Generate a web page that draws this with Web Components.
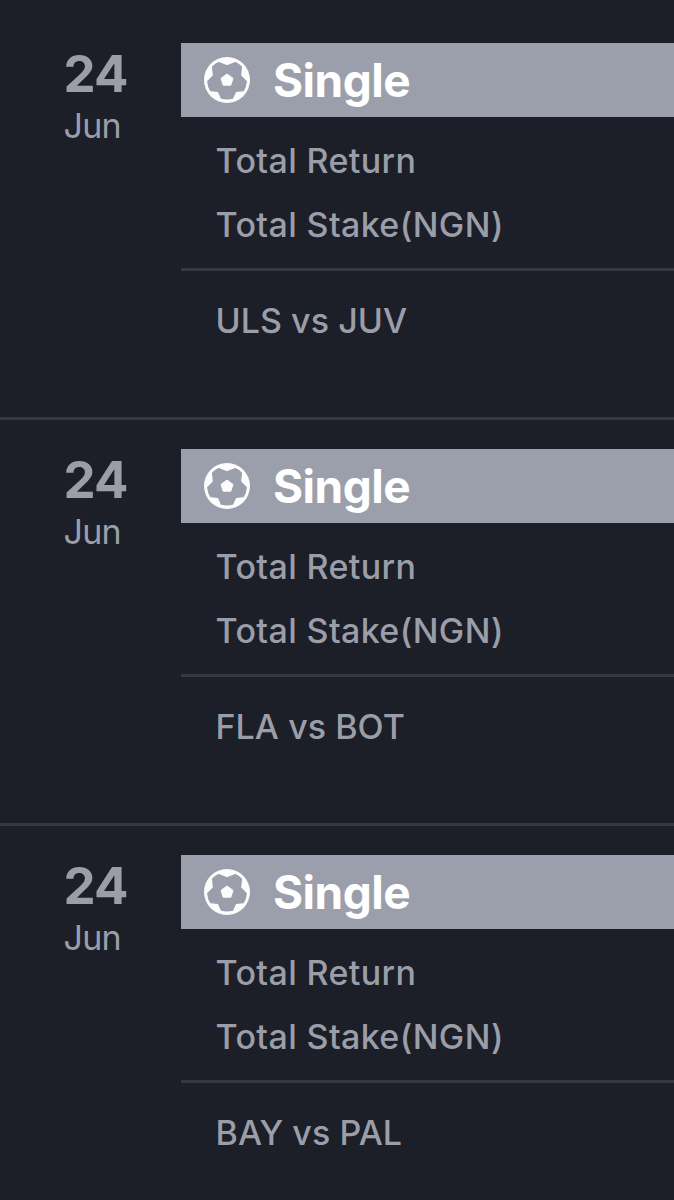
<!DOCTYPE html>
<html lang="en">
<head>
<meta charset="utf-8">
<title>Bet History</title>
<style>
html,body{margin:0;background:#1c1f27}
body{height:1200px;overflow:hidden;font-family:Inter,"Liberation Sans",sans-serif;color:#9b9ea9}
</style>
</head>
<body>
<bet-list>
<bet-ticket day="24" month="Jun" kind="Single">ULS vs JUV</bet-ticket>
<bet-ticket day="24" month="Jun" kind="Single">FLA vs BOT</bet-ticket>
<bet-ticket day="24" month="Jun" kind="Single">BAY vs PAL</bet-ticket>
</bet-list>
<script>
class BetList extends HTMLElement{
  constructor(){
    super();
    this.attachShadow({mode:"open"}).innerHTML=`
<style>:host{display:flex;flex-direction:column;padding-top:14px;height:1186px;overflow:hidden}</style><slot></slot>`;
  }
}
class BallIcon extends HTMLElement{
  constructor(){
    super();
    this.attachShadow({mode:"open"}).innerHTML=`
<style>:host{display:block;width:46px;height:46px}svg{display:block}</style>
<svg width="46" height="46" viewBox="0 0 46 46">
<circle cx="23" cy="23" r="23" fill="#fdfdfe"/>
<path fill="#9b9fab" stroke="#9b9fab" stroke-width="1.2" stroke-linejoin="round" d="M14.6 5.5L23 8.9L31.4 5.5Q35 7 37.4 9.8L36.6 18.6L42.3 24.4Q41.8 29.6 39.4 33.6L31.6 34.4L28.6 41.2Q23 42.6 17.4 41.2L14.4 34.4L6.6 33.6Q4.2 29.6 3.7 24.4L9.4 18.6L8.6 9.8Q11 7 14.6 5.5Z"/>
<path fill="#fdfdfe" stroke="#fdfdfe" stroke-width="1" stroke-linejoin="round" d="M23 17L29 21.4L26.8 28.2H19.2L17 21.4Z"/>
</svg>`;
  }
}
class BetTicket extends HTMLElement{
  connectedCallback(){
    const root=this.attachShadow({mode:"open"});
    root.innerHTML=`
<style>
:host{display:grid;grid-template-columns:180.5px 1fr;box-sizing:border-box;height:406px;flex:none;padding-top:29px;border-bottom:3px solid #353841}
.date{padding:1px 0 0 63.5px;white-space:nowrap}
.day{font-size:51px;line-height:60px;font-weight:700;letter-spacing:-.8px}
.month{font-size:34px;line-height:40px;font-weight:400;letter-spacing:-.7px;padding-top:2px}
header{display:flex;align-items:center;height:74px;background:#9b9fab;padding-left:23px;gap:23.5px;color:#fff;font-size:46px;line-height:74px;font-weight:700;letter-spacing:-.5px}
.totals{padding:12px 0 11px 35px;border-bottom:3px solid #353841}
.totals,.match{font-size:34px;line-height:64px;white-space:nowrap;letter-spacing:.38px;font-weight:500}
.match{padding:18px 0 0 35px;letter-spacing:.05px}
</style>
<div class="date"><div class="day"></div><div class="month"></div></div>
<section>
<header><ball-icon></ball-icon><span class="kind"></span></header>
<div class="totals"><div class="return">Total Return</div><div class="stake">Total Stake(NGN)</div></div>
<div class="match"><slot></slot></div>
</section>`;
    for(const name of ["day","month","kind"]) root.querySelector("."+name).textContent=this.getAttribute(name);
  }
}
customElements.define("bet-list",BetList);
customElements.define("ball-icon",BallIcon);
customElements.define("bet-ticket",BetTicket);
</script>
</body>
</html>
